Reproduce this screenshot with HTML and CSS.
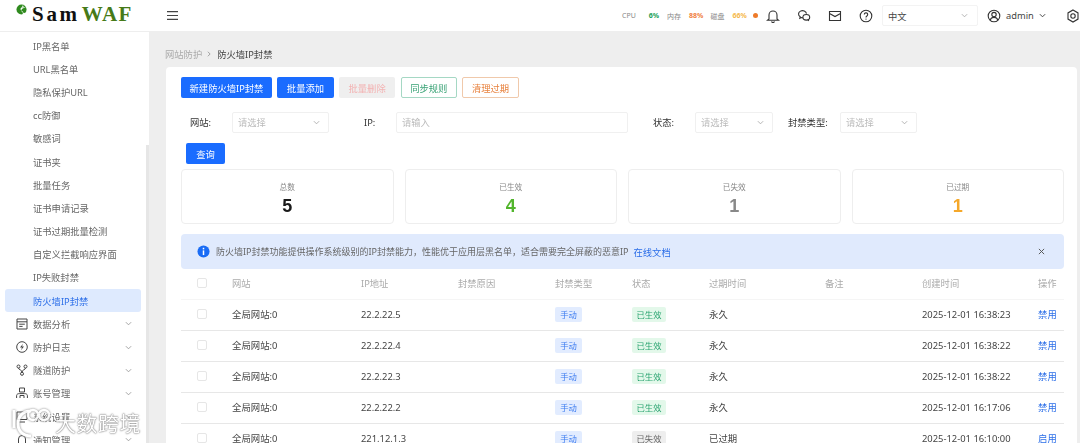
FILE: index.html
```html
<!DOCTYPE html>
<html lang="zh-CN">
<head>
<meta charset="utf-8">
<title>防火墙IP封禁</title>
<link rel="stylesheet" href="styles.css">
</head>
<body>
<div class="app">
  <header class="topbar">
    <div class="logo">
      <svg class="logo-mark" viewBox="0 0 12 12"><circle cx="6" cy="6" r="5.500" fill="#2f8a1e"/><path d="M11.500 4.500C9 4 6.500 4.500 6 6.500c-.5 2 1.500 3.500 4.500 3.300C9.500 11 8 11.500 6 11.500c2-1 2.500-2 1.500-3-1-1-3-1.500-2.500-3.500C5.500 3 8.500 3 11.500 4.500z" fill="#fff"/><circle cx="7.500" cy="2.500" r=".8" fill="#fff"/></svg>
      <span class="logo-sam">Sam</span><span class="logo-waf">WAF</span>
    </div>
    <svg class="burger" viewBox="0 0 11 9"><path d="M0 .7h11M0 4.500h11M0 8.300h11" stroke="#444" stroke-width="1.200" fill="none"/></svg>
    <div class="monitor">
      <span class="m-label m-cpu">CPU</span><span class="m-val m-green">6%</span>
      <span class="m-label m-mem">内存</span><span class="m-val m-orange">88%</span>
      <span class="m-label m-disk">磁盘</span><span class="m-val m-yellow">66%</span>
      <span class="m-dot"></span>
    </div>
    <div class="tools">
      <svg class="tool" viewBox="0 0 14 14"><path d="M3 10V6a4 4 0 0 1 8 0v4l1.500 1.200h-11zM5.500 12.500a1.600 1.600 0 0 0 3 0" fill="none" stroke="#333" stroke-width="1.100"/></svg>
      <svg class="tool" viewBox="0 0 14 14"><path d="M9.500 4.600A4 3.400 0 1 0 3.200 7.800L2.800 9.300l1.700-.8c.5.100 1 .2 1.500.2" fill="none" stroke="#333" stroke-width="1.100"/><ellipse cx="9.300" cy="8.300" rx="3.400" ry="2.800" fill="none" stroke="#333" stroke-width="1.100"/><path d="M11 10.800l.8 1.200" stroke="#333" stroke-width="1.100"/></svg>
      <svg class="tool" viewBox="0 0 14 14"><path d="M1.500 2.500h11v9h-11zM1.500 4.500L7 7.500l5.500-3" fill="none" stroke="#333" stroke-width="1.100"/></svg>
      <svg class="tool" viewBox="0 0 14 14"><circle cx="7" cy="7" r="5.800" fill="none" stroke="#333" stroke-width="1.100"/><path d="M5.300 5.500a1.700 1.700 0 1 1 2.600 1.500c-.6.400-.9.700-.9 1.400" fill="none" stroke="#333" stroke-width="1.100"/><circle cx="7" cy="10.100" r=".7" fill="#333"/></svg>
    </div>
    <div class="lang"><span>中文</span><svg class="chev chev-light" viewBox="0 0 8 5"><path d="M1 1l3 3 3-3" fill="none" stroke="currentColor"/></svg></div>
    <div class="user">
      <svg class="user-icon" viewBox="0 0 14 14"><circle cx="7" cy="7" r="5.800" fill="none" stroke="#333" stroke-width="1.100"/><circle cx="7" cy="5.600" r="2.200" fill="none" stroke="#333" stroke-width="1.100"/><path d="M3.200 11.200c.6-2 2-2.800 3.800-2.800s3.200.8 3.800 2.800" fill="none" stroke="#333" stroke-width="1.100"/></svg>
      <span class="user-name">admin</span>
      <svg class="chev chev-dark" viewBox="0 0 8 5"><path d="M1 1l3 3 3-3" fill="none" stroke="currentColor" stroke-width="1.100"/></svg>
    </div>
    <svg class="gear" viewBox="0 0 14 14"><path d="M7 1l5 2.900v6.200L7 13l-5-2.900V3.900z" fill="none" stroke="#333" stroke-width="1.100"/><circle cx="7" cy="7" r="2.200" fill="none" stroke="#333" stroke-width="1.100"/></svg>
  </header>

  <div class="layout">
    <aside class="sidebar">
      <ul class="menu">
        <li class="sub">IP黑名单</li>
        <li class="sub">URL黑名单</li>
        <li class="sub">隐私保护URL</li>
        <li class="sub">cc防御</li>
        <li class="sub">敏感词</li>
        <li class="sub">证书夹</li>
        <li class="sub">批量任务</li>
        <li class="sub">证书申请记录</li>
        <li class="sub">证书过期批量检测</li>
        <li class="sub">自定义拦截响应界面</li>
        <li class="sub">IP失败封禁</li>
        <li class="sub active">防火墙IP封禁</li>
        <li class="top"><svg class="m-icon" viewBox="0 0 12 12"><path d="M1 1h10v10H1zM1 3.800h10M3.200 6.200h5.600M3.200 8.400h3.400" fill="none" stroke="#444"/></svg>数据分析<svg class="chev chev-menu" viewBox="0 0 8 5"><path d="M1 1l3 3 3-3" fill="none" stroke="currentColor"/></svg></li>
        <li class="top"><svg class="m-icon" viewBox="0 0 12 12"><circle cx="6" cy="6" r="5.300" fill="none" stroke="#444"/><path d="M7 2.800L4 6.500h2L5 9.200l3-3.700H6z" fill="#444"/></svg>防护日志<svg class="chev chev-menu" viewBox="0 0 8 5"><path d="M1 1l3 3 3-3" fill="none" stroke="currentColor"/></svg></li>
        <li class="top"><svg class="m-icon" viewBox="0 0 12 12"><circle cx="2.500" cy="2.500" r="1.500" fill="none" stroke="#444"/><circle cx="9.500" cy="2.500" r="1.500" fill="none" stroke="#444"/><circle cx="6" cy="9.800" r="1.500" fill="none" stroke="#444"/><path d="M2.500 4c0 2 3.500 1.500 3.500 4.300M9.500 4c0 2-3.500 1.500-3.500 4.300" fill="none" stroke="#444"/></svg>隧道防护<svg class="chev chev-menu" viewBox="0 0 8 5"><path d="M1 1l3 3 3-3" fill="none" stroke="currentColor"/></svg></li>
        <li class="top"><svg class="m-icon" viewBox="0 0 12 12"><path d="M3.500 1h5v4h-5zM.6 11V8.500C.6 7.200 2 6.600 3.500 6.600h5c1.500 0 2.900.6 2.900 1.900V11M4 11V8.500h4V11" fill="none" stroke="#444"/></svg>账号管理<svg class="chev chev-menu" viewBox="0 0 8 5"><path d="M1 1l3 3 3-3" fill="none" stroke="currentColor"/></svg></li>
        <li class="top"><svg class="m-icon" viewBox="0 0 12 12"><path d="M1 1h10v7.500H1zM3 11h6" fill="none" stroke="#444"/></svg>系统设置<svg class="chev chev-menu" viewBox="0 0 8 5"><path d="M1 1l3 3 3-3" fill="none" stroke="currentColor"/></svg></li>
        <li class="top"><svg class="m-icon" viewBox="0 0 12 12"><path d="M2.500 10V5a3.500 3.500 0 0 1 7 0v5M1 10.500h2M9 10.500h2" fill="none" stroke="#444"/></svg>通知管理<svg class="chev chev-menu" viewBox="0 0 8 5"><path d="M1 1l3 3 3-3" fill="none" stroke="currentColor"/></svg></li>
      </ul>
      <div class="sb-thumb"></div>
    </aside>

    <main class="main">
      <nav class="crumbs"><span class="crumb-parent">网站防护</span><svg class="crumb-sep" viewBox="0 0 5 8"><path d="M1 1l3 3-3 3" fill="none" stroke="#888"/></svg><span class="crumb-current">防火墙IP封禁</span></nav>
      <section class="card">
        <div class="actions">
          <button class="btn btn-primary btn-new">新建防火墙IP封禁</button>
          <button class="btn btn-primary btn-std">批量添加</button>
          <button class="btn btn-disabled btn-std">批量删除</button>
          <button class="btn btn-green btn-std">同步规则</button>
          <button class="btn btn-orange btn-std">清理过期</button>
        </div>
        <div class="filters">
          <span class="f-label f-site">网站:</span>
          <div class="field w-site"><span>请选择</span><svg class="chev chev-light" viewBox="0 0 8 5"><path d="M1 1l3 3 3-3" fill="none" stroke="currentColor"/></svg></div>
          <span class="f-label f-ip">IP:</span>
          <div class="field w-ip"><span>请输入</span></div>
          <span class="f-label f-state">状态:</span>
          <div class="field w-state"><span>请选择</span><svg class="chev chev-light" viewBox="0 0 8 5"><path d="M1 1l3 3 3-3" fill="none" stroke="currentColor"/></svg></div>
          <span class="f-label f-type">封禁类型:</span>
          <div class="field w-type"><span>请选择</span><svg class="chev chev-light" viewBox="0 0 8 5"><path d="M1 1l3 3 3-3" fill="none" stroke="currentColor"/></svg></div>
        </div>
        <button class="btn btn-primary btn-query">查询</button>
        <div class="stats">
          <div class="stat"><span class="stat-label">总数</span><span class="stat-num n-total">5</span></div>
          <div class="stat"><span class="stat-label">已生效</span><span class="stat-num n-ok">4</span></div>
          <div class="stat"><span class="stat-label">已失效</span><span class="stat-num n-off">1</span></div>
          <div class="stat"><span class="stat-label">已过期</span><span class="stat-num n-exp">1</span></div>
        </div>
        <div class="alert">
          <svg class="alert-icon" viewBox="0 0 14 14"><circle cx="7" cy="7" r="6.500" fill="#1a6cf5"/><rect x="6.200" y="3" width="1.600" height="1.700" fill="#fff"/><rect x="6.200" y="5.800" width="1.600" height="5" fill="#fff"/></svg>
          <span class="alert-text">防火墙IP封禁功能提供操作系统级别的IP封禁能力，性能优于应用层黑名单，适合需要完全屏蔽的恶意IP</span>
          <a class="alert-link">在线文档</a>
          <svg class="alert-close" viewBox="0 0 8 8"><path d="M1 1l6 6M7 1L1 7" stroke="#555" stroke-width="1.100"/></svg>
        </div>
        <table class="grid">
          <colgroup>
            <col class="c-check"><col class="c-site"><col class="c-ip"><col class="c-reason"><col class="c-type"><col class="c-state"><col class="c-exp"><col class="c-note"><col class="c-time"><col class="c-op">
          </colgroup>
          <thead>
            <tr><th><span class="box"></span></th><th>网站</th><th>IP地址</th><th>封禁原因</th><th>封禁类型</th><th>状态</th><th>过期时间</th><th>备注</th><th>创建时间</th><th>操作</th></tr>
          </thead>
          <tbody>
            <tr><td><span class="box"></span></td><td>全局网站:0</td><td>22.2.22.5</td><td></td><td><span class="tag tag-blue">手动</span></td><td><span class="tag tag-green">已生效</span></td><td>永久</td><td></td><td>2025-12-01 16:38:23</td><td><a class="op">禁用</a></td></tr>
            <tr><td><span class="box"></span></td><td>全局网站:0</td><td>22.2.22.4</td><td></td><td><span class="tag tag-blue">手动</span></td><td><span class="tag tag-green">已生效</span></td><td>永久</td><td></td><td>2025-12-01 16:38:22</td><td><a class="op">禁用</a></td></tr>
            <tr><td><span class="box"></span></td><td>全局网站:0</td><td>22.2.22.3</td><td></td><td><span class="tag tag-blue">手动</span></td><td><span class="tag tag-green">已生效</span></td><td>永久</td><td></td><td>2025-12-01 16:38:22</td><td><a class="op">禁用</a></td></tr>
            <tr><td><span class="box"></span></td><td>全局网站:0</td><td>22.2.22.2</td><td></td><td><span class="tag tag-blue">手动</span></td><td><span class="tag tag-green">已生效</span></td><td>永久</td><td></td><td>2025-12-01 16:17:06</td><td><a class="op">禁用</a></td></tr>
            <tr><td><span class="box"></span></td><td>全局网站:0</td><td>221.12.1.3</td><td></td><td><span class="tag tag-blue">手动</span></td><td><span class="tag tag-grey">已失效</span></td><td>已过期</td><td></td><td>2025-12-01 16:10:00</td><td><a class="op">启用</a></td></tr>
          </tbody>
        </table>
      </section>
    </main>
  </div>
  <div class="watermark">
    <svg class="wm-logo" viewBox="0 0 46 32"><path d="M5 3v18M22 4C13 4 9 10 9 17c0 7 5 12 13 12" fill="none" stroke="#fff" stroke-width="3"/><circle cx="24" cy="8" r="5" fill="none" stroke="#fff" stroke-width="2.500"/><circle cx="35" cy="8" r="5" fill="none" stroke="#fff" stroke-width="2.500"/></svg>
    <span class="wm-text">大数跨境</span>
  </div>
</div>
</body>
</html>
```
FILE: styles.css
```css
* { box-sizing: border-box; }
html, body { margin: 0; padding: 0; height: 443px; overflow: hidden; }
body {
  font-family: "Noto Sans", "Noto Sans CJK SC", sans-serif;
  font-size: 9.3px;
  color: #333;
  background: #eee;
}
.app { position: relative; width: 1080px; height: 443px; overflow: hidden; display: flex; flex-direction: column; filter: blur(0.4px); }

/* Top bar */
.topbar { flex: none; height: 32px; background: #fff; display: flex; align-items: center; border-bottom: 1px solid #eee; }
.logo { flex: none; width: 167px; padding: 0 0 3px 16px; display: flex; align-items: center; font-family: "Liberation Serif", serif; font-weight: 700; font-size: 21px; line-height: 1; }
.logo-mark { width: 11px; height: 11px; margin-right: 5px; margin-top: -9px; flex: none; }
.logo-sam { color: #111; letter-spacing: 2.700px; margin-right: 2px; }
.logo-waf { color: #467a18; letter-spacing: 1.500px; }
.burger { width: 11px; height: 9px; flex: none; }
.monitor { margin-left: 444px; width: 135px; display: flex; align-items: center; font-size: 7px; height: 31px; flex: none; white-space: nowrap; }
.m-label { color: #888; flex: none; }
.m-val { font-weight: 700; flex: none; }
.m-cpu { margin-right: 13px; }
.m-green { color: #18a058; margin-right: 8px; }
.m-mem { margin-right: 8px; }
.m-orange { color: #f08040; margin-right: 7px; }
.m-disk { margin-right: 8px; }
.m-yellow { color: #f5b84a; margin-right: 6px; }
.m-dot { width: 5px; height: 5px; border-radius: 50%; background: #ee7b2a; flex: none; }
.tools { display: flex; align-items: center; gap: 17px; flex: none; margin-left: 9px; }
.tool { width: 14px; height: 14px; flex: none; }
.lang { margin-left: 9px; width: 96px; height: 21px; flex: none; border: 1px solid #f3f3f3; border-radius: 2px; display: flex; align-items: center; justify-content: space-between; padding: 0 9px 0 5px; color: #444; }
.user { display: flex; align-items: center; margin-left: 9px; flex: none; }
.user-icon { width: 14px; height: 14px; margin-right: 5px; }
.user-name { color: #444; margin-right: 5px; }
.gear { width: 14px; height: 14px; margin-left: 20px; flex: none; }
.chev { width: 7px; height: 5px; flex: none; }
.chev-light { color: #aaa; }
.chev-dark { color: #444; }

/* Layout */
.layout { flex: 1; display: flex; min-height: 0; }
.sidebar { position: relative; flex: none; width: 149px; background: #fff; overflow: hidden; padding: 2px 0 0 5px; }
.menu { list-style: none; margin: 0; padding: 0; width: 136px; }
.menu li { height: 23.2px; display: flex; align-items: center; color: #666; border-radius: 3px; }
.sub { padding-left: 28px; }
.sub.active { background: #deeafe; color: #2d6fe8; }
.top { padding-left: 11px; }
.m-icon { width: 12px; height: 12px; margin-right: 5px; flex: none; }
.chev-menu { color: #999; margin-left: auto; margin-right: 9px; }
.sb-thumb { position: absolute; right: 0; top: 113px; width: 3px; bottom: 0; background: #e6e6e6; }

/* Main */
.main { flex: 1; min-width: 0; padding: 0 3px 0 17px; }
.crumbs { height: 35px; display: flex; align-items: center; padding-top: 9px; margin-left: -1px; }
.crumb-parent { color: #aaa; }
.crumb-sep { width: 4px; height: 6px; margin: 0 6px 0 5px; }
.crumb-current { color: #444; }
.card { background: #fff; border-radius: 4px 4px 0 0; padding: 10px 13px 0 15px; height: 400px; }
.btn { font: inherit; height: 21px; border-radius: 2px; border: 1px solid transparent; padding: 0; display: inline-flex; align-items: center; justify-content: center; flex: none; }
.btn-primary { background: #1a6cff; color: #fff; }
.btn-disabled { background: #efefef; color: #f3b3b3; }
.btn-green { background: #fff; border-color: #a5d8c4; color: #3aa376; }
.btn-orange { background: #fff; border-color: #f0c9ab; color: #e8823e; }
.btn-new { width: 91px; }
.btn-std { width: 56.500px; }
.actions { display: flex; gap: 5.200px; }
.filters { display: flex; align-items: center; margin-top: 14px; }
.f-label { flex: none; color: #333; padding-bottom: 1px; }
.f-site { width: 51px; padding-left: 9px; }
.f-ip { width: 67px; padding-left: 35px; }
.f-state { width: 67px; padding-left: 25px; }
.f-type { width: 67px; padding-left: 15px; }
.field { flex: none; height: 21px; border: 1px solid #f0f0f0; border-radius: 2px; display: flex; align-items: center; justify-content: space-between; padding: 0 8px 1px 5px; color: #bbb; }
.w-site { width: 97px; }
.w-ip { width: 232px; }
.w-state { width: 78px; }
.w-type { width: 77px; }
.btn-query { width: 39px; margin: 10px 0 0 5px; display: flex; }
.stats { display: grid; grid-template-columns: repeat(4, 1fr); gap: 11px; margin-top: 5px; }
.stat { height: 55px; border: 1px solid #eee; border-radius: 4px; display: flex; flex-direction: column; align-items: center; padding-top: 11px; }
.stat-label { font-size: 7.700px; color: #888; line-height: 12px; }
.stat-num { font-size: 18px; font-weight: 700; line-height: 22px; margin-top: 2px; font-family: "Liberation Sans", sans-serif; }
.n-total { color: #1a1a1a; }
.n-ok { color: #52b52c; }
.n-off { color: #888; }
.n-exp { color: #f5a82a; }
.alert { height: 35px; margin-top: 10px; background: #e0eafd; border-radius: 4px; display: flex; align-items: center; padding: 0 19px 0 16px; }
.alert-icon { width: 13px; height: 13px; margin-right: 6px; flex: none; }
.alert-text { color: #666; font-size: 9px; white-space: nowrap; }
.alert-link { color: #2d6fe8; margin-left: 5px; }
.alert-close { width: 7px; height: 7px; margin-left: auto; }
.grid { width: 883px; table-layout: fixed; border-collapse: collapse; }
.c-check { width: 51px; }
.c-site { width: 129px; }
.c-ip { width: 97px; }
.c-reason { width: 97px; }
.c-type { width: 77px; }
.c-state { width: 77px; }
.c-exp { width: 116px; }
.c-note { width: 97px; }
.c-time { width: 116px; }
.c-op { width: 26px; }
.grid th { height: 30px; padding: 0 0 1px; text-align: left; font-weight: 400; color: #aaa; border-bottom: 1px solid #f5f5f5; }
.grid td { height: 31px; padding: 0 0 1px; color: #444; border-bottom: 1px solid #e7e7e7; white-space: nowrap; font-size: 9.400px; }
.box { display: block; width: 10px; height: 10px; margin-left: 16px; border: 1px solid #e6e6e6; border-radius: 2px; }
.tag { display: flex; align-items: center; justify-content: center; height: 15px; border-radius: 2px; font-size: 8.300px; }
.tag-blue { width: 27px; background: #e2ecff; color: #3b7bf0; }
.tag-green { width: 34px; background: #e3f8ea; color: #2ba471; }
.tag-grey { width: 34px; background: #eee; color: #666; }
.op { color: #2d6fe8; }

/* Watermark */
.watermark { position: absolute; left: 9px; bottom: 4px; display: flex; align-items: center; opacity: .9; }
.wm-logo { width: 46px; height: 32px; flex: none; filter: drop-shadow(0 0 1px #777); }
.wm-text { font-size: 21px; line-height: 30px; color: #fff; letter-spacing: .5px; text-shadow: 0 0 1px #555, 0 0 2px #777; }
```
